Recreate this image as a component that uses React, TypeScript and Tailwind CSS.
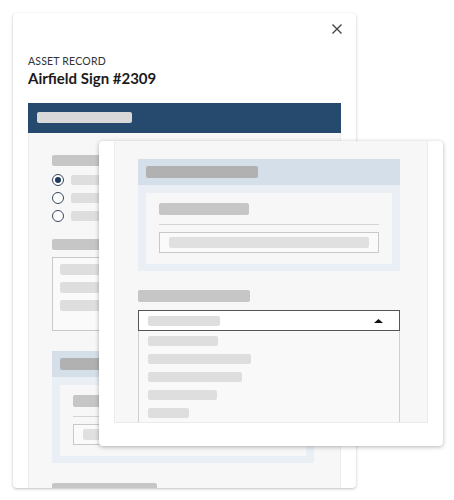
import React from "react";

const Bar = ({ w, h = "h-[10px]", c = "bg-[#dedede]" }: { w: string; h?: string; c?: string }) => (
  <div className={`${w} ${h} ${c} rounded-[2px] shrink-0`} />
);

function BlueSection({ innerLabelW, headerW }: { innerLabelW: string; headerW: string }) {
  return (
    <div className="w-[262px] bg-[#e9eff5] pb-[7px] shrink-0">
      <div className="h-[26px] bg-[#d5dfe9] pl-[8px] pt-[7px]">
        <div className={`${headerW} h-[12px] bg-[#b1b1b1] rounded-[2px]`} />
      </div>
      <div className="mx-[8px] mt-[8px] bg-[#f7f7f7] px-[13px] pt-[10px] pb-[11px]">
        <div className={`${innerLabelW} h-[12px] bg-[#c6c6c6] rounded-[2px]`} />
        <div className="mt-[9px] h-px bg-[#d4d4d4]" />
        <div className="mt-[7px] h-[21px] border border-[#c9c9c9] bg-[#fafafa] px-[9px] flex items-center">
          <div className="w-full h-[11px] bg-[#e0e0e0] rounded-[2px]" />
        </div>
      </div>
    </div>
  );
}

export default function App() {
  return (
    <div
      className="relative w-[454px] h-[500px] bg-white overflow-hidden pt-[13px] pl-[13px]"
      style={{ fontFamily: "Lato, 'Open Sans', sans-serif" }}
    >
      {/* Main card */}
      <div className="relative w-[343px] h-[475px] rounded-[4px] bg-white shadow-[0_1px_3px_rgba(0,0,0,0.25)] overflow-hidden flex flex-col">
        <svg className="absolute top-[11px] right-[14px]" width="10" height="10" viewBox="0 0 10 10">
          <path d="M0.5 0.5 L9.5 9.5 M9.5 0.5 L0.5 9.5" stroke="#444" strokeWidth="1.4" />
        </svg>
        <div className="px-[15px] pt-[41px]">
          <div className="text-[10.5px] leading-[14px] tracking-[0.2px] text-[#333]">ASSET RECORD</div>
          <div className="text-[15px] leading-[20px] font-bold text-[#1b1b1b]">Airfield Sign #2309</div>
        </div>
        <div className="mt-[15px] mx-[15px] h-[30px] bg-[#264a6e] pl-[9px] pt-[9px] shrink-0">
          <div className="w-[95px] h-[11px] bg-[#d9d9d9] rounded-[2px]" />
        </div>
        <div className="mx-[15px] flex-1 bg-[#f7f7f7] border-x border-[#ebebeb] pl-[23px] pt-[22px] flex flex-col">
          <Bar w="w-[100px]" h="h-[11px]" c="bg-[#c6c6c6]" />
          <div className="mt-[8px] flex flex-col gap-[7px]">
            {[true, false, false].map((checked, i) => (
              <div key={i} className="flex items-center gap-[7px] h-[11px]">
                <div className="w-[12px] h-[12px] rounded-full border-[1.5px] border-[#34495e] bg-white flex items-center justify-center shrink-0">
                  {checked && <div className="w-[6px] h-[6px] rounded-full bg-[#1f3a5a]" />}
                </div>
                <Bar w="w-[120px]" />
              </div>
            ))}
          </div>
          <div className="mt-[18px]">
            <Bar w="w-[100px]" h="h-[11px]" c="bg-[#c6c6c6]" />
          </div>
          <div className="mt-[7px] w-[261px] h-[74px] border border-[#c9c9c9] bg-[#fafafa] pl-[7px] pt-[6px] flex flex-col gap-[7px]">
            <Bar w="w-[180px]" h="h-[11px]" />
            <Bar w="w-[160px]" h="h-[11px]" />
            <Bar w="w-[170px]" h="h-[11px]" />
          </div>
          <div className="mt-[20px]">
            <BlueSection innerLabelW="w-[90px]" headerW="w-[112px]" />
          </div>
          <div className="mt-[20px]">
            <Bar w="w-[105px]" h="h-[11px]" c="bg-[#c6c6c6]" />
          </div>
        </div>
      </div>

      {/* Overlay card */}
      <div className="absolute left-[99px] top-[141px] w-[344px] h-[305px] rounded-[4px] bg-white shadow-[0_1px_4px_rgba(0,0,0,0.3)] overflow-hidden">
        <div className="mx-[15px] h-[282px] bg-[#f7f7f7] border-x border-b border-[#ebebeb] pl-[23px] pt-[18px] overflow-hidden flex flex-col">
          <BlueSection innerLabelW="w-[90px]" headerW="w-[112px]" />
          <div className="mt-[19px]">
            <Bar w="w-[112px]" h="h-[12px]" c="bg-[#c6c6c6]" />
          </div>
          <div className="mt-[8px] w-[262px] h-[21px] border border-[#555] bg-white flex items-center justify-between pl-[9px] pr-[16px] shrink-0">
            <Bar w="w-[72px]" />
            <svg width="9" height="4" viewBox="0 0 9 4">
              <path d="M0 4 L4.5 0 L9 4 Z" fill="#111" />
            </svg>
          </div>
          <div className="w-[262px] h-[120px] border-x border-[#d0d0d0] bg-[#f9f9f9] pl-[9px] pt-[5px] flex flex-col gap-[8px] shrink-0">
            <Bar w="w-[70px]" />
            <Bar w="w-[103px]" />
            <Bar w="w-[94px]" />
            <Bar w="w-[69px]" />
            <Bar w="w-[41px]" />
          </div>
        </div>
      </div>
    </div>
  );
}
